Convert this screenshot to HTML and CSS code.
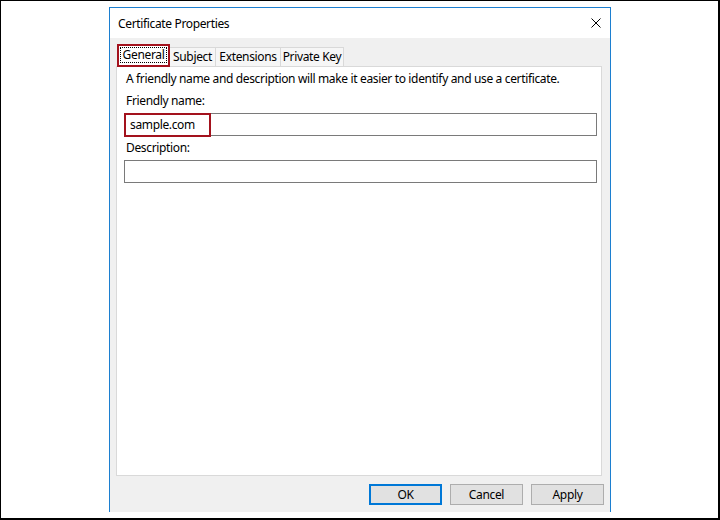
FILE: index.html
```html
<!DOCTYPE html>
<html>
<head>
<meta charset="utf-8">
<title>Certificate Properties</title>
<link rel="stylesheet" href="styles.css">
</head>
<body>
<div class="screen">
  <div class="dialog">
    <div class="titlebar">
      <span class="title">Certificate Properties</span>
      <svg class="close" width="10" height="10" viewBox="0 0 10 10">
        <path d="M0.5 0.5 L9.5 9.5 M9.5 0.5 L0.5 9.5" stroke="#000" stroke-width="1" fill="none"/>
      </svg>
    </div>
    <div class="body">
      <div class="tabs">
        <div class="tab selected"><span class="focus">General</span></div>
        <div class="tab subject">Subject</div>
        <div class="tab extensions">Extensions</div>
        <div class="tab privkey">Private Key</div>
      </div>
      <div class="panel">
        <div class="intro">A friendly name and description will make it easier to identify and use a certificate.</div>
        <div class="label">Friendly name:</div>
        <div class="field"><span class="mark">sample.com</span></div>
        <div class="label desc">Description:</div>
        <div class="field"></div>
      </div>
      <div class="buttons">
        <button class="btn default">OK</button>
        <button class="btn">Cancel</button>
        <button class="btn">Apply</button>
      </div>
    </div>
  </div>
</div>
</body>
</html>
```

FILE: styles.css
```css
* {
  box-sizing: border-box;
}
body {
  margin: 0;
  background: #fff;
  font-family: "Noto Sans", "Liberation Sans", sans-serif;
  font-size: 12px;
  letter-spacing: -0.35px;
  color: #000;
}
.screen {
  width: 720px;
  height: 520px;
  border-style: solid;
  border-color: #000;
  border-width: 1px 2px 2px 1px;
  background: #fff;
  overflow: hidden;
}
.dialog {
  margin: 6px 0 0 108px;
  width: 502px;
  height: 505px;
  border: 1px solid #1c7fd0;
  border-bottom: none;
  display: flex;
  flex-direction: column;
}
.titlebar {
  height: 30px;
  background: #fff;
  display: flex;
  align-items: center;
  padding: 1px 0 0 8px;
}
.title {
  flex: 1;
  line-height: 16px;
}
.close {
  margin: -1px 9px 0 0;
}
.body {
  flex: 1;
  background: #f0f0f0;
  padding: 6px 0 0 6px;
}
.tabs {
  display: flex;
  align-items: flex-end;
  height: 22px;
}
.tab {
  height: 19px;
  background: #f6f6f6;
  border-top: 1px solid #d9d9d9;
  border-right: 1px solid #d9d9d9;
  display: flex;
  align-items: center;
  justify-content: center;
  line-height: 16px;
  white-space: nowrap;
}
.tab.selected {
  position: relative;
  z-index: 1;
  width: 53px;
  height: 23px;
  margin: 0 0 -1px 1px;
  background: #fff;
  border: 2px solid #a3121d;
  padding-bottom: 1px;
}
.focus {
  display: block;
  width: 47px;
  height: 16px;
  border: 1px dotted #000;
  text-align: center;
  line-height: 14px;
}
.subject { width: 46px; }
.extensions { width: 65px; }
.privkey { width: 63px; }
.panel {
  width: 486px;
  height: 410px;
  background: #fff;
  border: 1px solid #d9d9d9;
  padding: 4px 0 0 7px;
}
.intro, .label {
  padding-left: 2px;
  line-height: 16px;
}
.label {
  margin-top: 6px;
}
.label.desc {
  margin-top: 4px;
}
.field {
  margin-top: 4px;
  width: 473px;
  height: 23px;
  border: 1px solid #7a7a7a;
  display: flex;
}
.mark {
  margin: -1px 0 -2px -1px;
  width: 87px;
  height: 24px;
  border: 2px solid #a3121d;
  padding-left: 4px;
  line-height: 20px;
}
.buttons {
  display: flex;
  justify-content: flex-end;
  gap: 8px;
  margin-top: 8px;
  padding-right: 6px;
}
.btn {
  width: 73px;
  height: 21px;
  background: #e1e1e1;
  border: 1px solid #adadad;
  font-family: inherit;
  font-size: 12px;
  letter-spacing: inherit;
  color: #000;
  padding: 0;
}
.btn.default {
  border: 2px solid #0078d7;
}
```
